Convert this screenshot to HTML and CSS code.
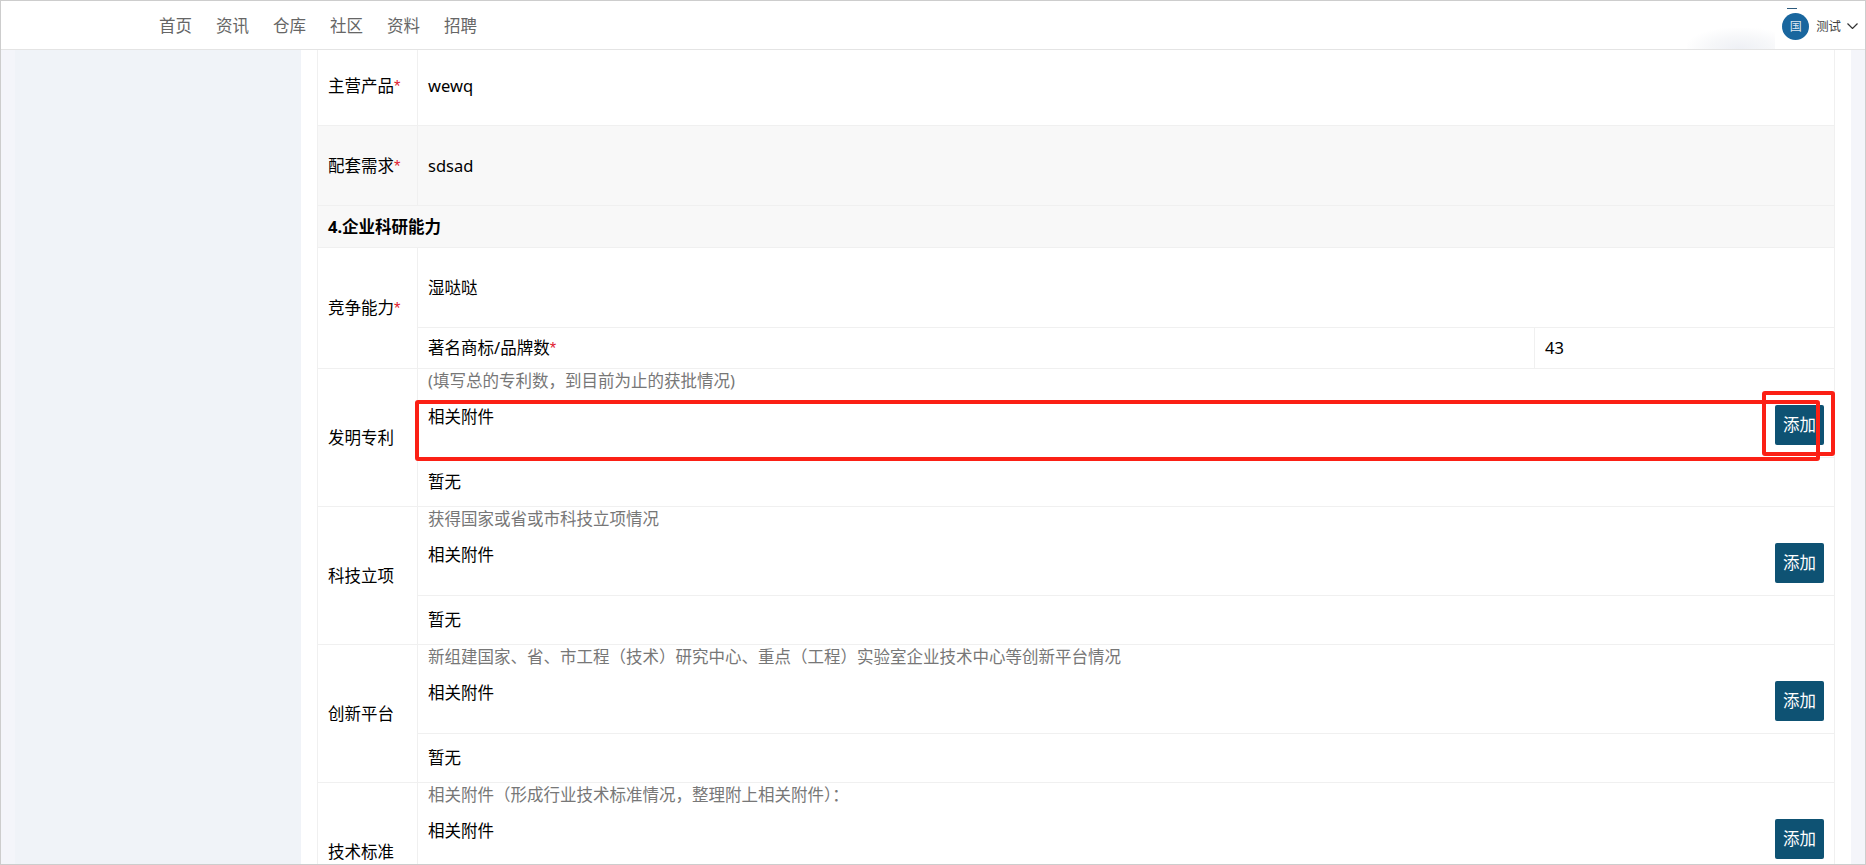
FILE: index.html
```html
<!DOCTYPE html>
<html lang="zh-CN">
<head>
    <meta charset="UTF-8">
    <title>企业信息</title>
    <link rel="stylesheet" href="styles.css">
</head>
<body>

<div class="app">
    <header class="topbar">
        <nav class="topnav">
            <a>首页</a>
            <a>资讯</a>
            <a>仓库</a>
            <a>社区</a>
            <a>资料</a>
            <a>招聘</a>
        </nav>
        <div class="blur-patch"></div>
        <div class="user">
            <span class="avatar">国</span>
            <span class="user-name">测试</span>
            <svg class="chevron" width="11" height="6" viewBox="0 0 11 6"><path d="M0.5 0.5 L5.5 5.5 L10.5 0.5" fill="none" stroke="#333" stroke-width="1.2"/></svg>
        </div>
    </header>

    <div class="layout">
        <aside class="sidebar"></aside>
        <main class="main">
            <table class="info-table">
                <colgroup>
                    <col class="col-label">
                    <col>
                    <col class="col-value">
                </colgroup>
                <tr class="row-80">
                    <th>主营产品<i>*</i></th>
                    <td colspan="2">wewq</td>
                </tr>
                <tr class="row-80 grey">
                    <th>配套需求<i>*</i></th>
                    <td colspan="2">sdsad</td>
                </tr>
                <tr class="row-title grey">
                    <th colspan="3">4.企业科研能力</th>
                </tr>
                <tr class="row-80">
                    <th rowspan="2">竞争能力<i>*</i></th>
                    <td colspan="2">湿哒哒</td>
                </tr>
                <tr class="row-41">
                    <td>著名商标/品牌数<i>*</i></td>
                    <td>43</td>
                </tr>

                <tr class="row-attach">
                    <th rowspan="2">发明专利</th>
                    <td colspan="2">
                        <div class="hint">(填写总的专利数，到目前为止的获批情况)</div>
                        <div class="attach"><span>相关附件</span><button class="btn-add">添加</button></div>
                    </td>
                </tr>
                <tr class="row-none"><td colspan="2">暂无</td></tr>

                <tr class="row-attach">
                    <th rowspan="2">科技立项</th>
                    <td colspan="2">
                        <div class="hint">获得国家或省或市科技立项情况</div>
                        <div class="attach"><span>相关附件</span><button class="btn-add">添加</button></div>
                    </td>
                </tr>
                <tr class="row-none"><td colspan="2">暂无</td></tr>

                <tr class="row-attach">
                    <th rowspan="2">创新平台</th>
                    <td colspan="2">
                        <div class="hint">新组建国家、省、市工程（技术）研究中心、重点（工程）实验室企业技术中心等创新平台情况</div>
                        <div class="attach"><span>相关附件</span><button class="btn-add">添加</button></div>
                    </td>
                </tr>
                <tr class="row-none"><td colspan="2">暂无</td></tr>

                <tr class="row-attach">
                    <th rowspan="2">技术标准</th>
                    <td colspan="2">
                        <div class="hint">相关附件（形成行业技术标准情况，整理附上相关附件）：</div>
                        <div class="attach"><span>相关附件</span><button class="btn-add">添加</button></div>
                    </td>
                </tr>
                <tr class="row-none"><td colspan="2">暂无</td></tr>
            </table>
        </main>
    </div>

    <!-- red annotation boxes drawn over the screenshot -->
    <div class="mark mark-row"></div>
    <div class="mark mark-btn"></div>
</div>

</body>
</html>
```

FILE: styles.css
```css
* { box-sizing: border-box; }

html, body {
    margin: 0;
    padding: 0;
    height: 100%;
    overflow: hidden;
}

body {
    font-family: "Noto Sans", "Noto Sans CJK SC", sans-serif;
    font-size: 16.5px;
    color: #000;
}

.app {
    position: relative;
    height: 865px;
    border: 1px solid #cdcdcd;
    background: #f4f5fa;
    overflow: hidden;
    display: flex;
    flex-direction: column;
}

/* --- top bar --- */
.topbar {
    flex: none;
    height: 49px;
    background: #fff;
    border-bottom: 1px solid #e4e4e4;
    display: flex;
    align-items: center;
    padding-left: 158px;
    position: relative;
}

.topnav {
    display: flex;
    gap: 24px;
    color: #666;
}

.blur-patch {
    position: absolute;
    left: 1686px;
    top: 27px;
    width: 88px;
    height: 21px;
    background: radial-gradient(ellipse at 60% 100%, #eef0f5 0%, #f6f7f9 40%, #fff 75%);
}

.user {
    margin-left: auto;
    margin-right: 7px;
    display: flex;
    align-items: center;
    position: relative;
    top: 1px;
}

/* small dark sliver showing above the avatar */
.user::before {
    content: "";
    position: absolute;
    left: 5px;
    top: -5px;
    width: 10px;
    height: 1px;
    background: #2c5a7c;
}

.avatar {
    width: 27px;
    height: 27px;
    border-radius: 50%;
    background: #19669e;
    color: #dfe9f2;
    font-size: 12px;
    line-height: 27px;
    text-align: center;
}

.user-name {
    font-size: 12.4px;
    color: #444;
    margin-left: 7px;
}

.chevron {
    margin-left: 6px;
}

/* --- body --- */
.layout {
    flex: 1;
    display: flex;
    min-height: 0;
    padding: 0 14px;
}

.sidebar {
    flex: none;
    width: 286px;
    background: #f0f3f8;
}

.main {
    flex: 1;
    background: #fff;
    padding: 0 16px;
    overflow: hidden;
}

.info-table {
    width: 100%;
    table-layout: fixed;
    border-collapse: collapse;
    margin-top: -5px;
}

.col-label { width: 100px; }
.col-value { width: 300px; }

.info-table th,
.info-table td {
    border: 1px solid #f0f0f0;
    padding: 0 10px;
    font-weight: normal;
    text-align: left;
    line-height: 24px;
}

.info-table i {
    font-family: "Liberation Sans", sans-serif;
    font-style: normal;
    color: #e01b2f;
}

.grey { background: #f8f8f8; }

.row-80 { height: 80px; }
.row-41 { height: 41px; }
.row-title { height: 42px; }
.row-title th { font-weight: bold; }

.row-attach { height: 89px; }
.row-none { height: 49px; }

.row-attach td { vertical-align: top; }

.info-table .hint {
    height: 26px;
    line-height: 24px;
    color: #777;
}

.attach {
    display: flex;
    justify-content: space-between;
    margin-top: 10px;
    height: 52px;
}

.btn-add {
    width: 49px;
    height: 40px;
    padding: 0;
    border: none;
    border-radius: 2px;
    background: #0e5273;
    color: #fff;
    font: inherit;
}

/* --- annotations --- */
.mark {
    position: absolute;
    border: 4px solid #fb2015;
    border-radius: 3px;
}

.mark-row {
    left: 414px;
    top: 399px;
    width: 1405px;
    height: 61px;
}

.mark-btn {
    left: 1761px;
    top: 390px;
    width: 73px;
    height: 65px;
}
```
